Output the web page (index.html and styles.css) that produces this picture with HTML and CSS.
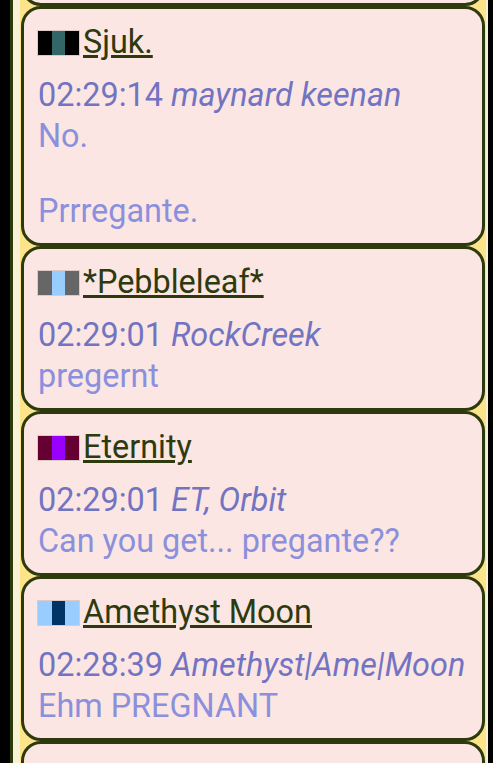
FILE: index.html
```html
<!DOCTYPE html>
<html lang="en">
<head>
    <meta charset="UTF-8">
    <meta name="viewport" content="width=device-width, initial-scale=1.0">
    <title>Chat</title>
    <link rel="stylesheet" href="styles.css">
</head>
<body>
    <div class="page">
        <div class="feed">
            <div class="post post-cut"></div>

            <div class="post">
                <div class="author">
                    <span class="swatch"><i style="background:#000"></i><i style="background:#336666"></i><i style="background:#000"></i></span><a href="#">Sjuk.</a>
                </div>
                <div class="meta">02:29:14 <em>maynard keenan</em></div>
                <div class="text">No.<br><br>Prrregante.</div>
            </div>

            <div class="post">
                <div class="author">
                    <span class="swatch"><i style="background:#666666"></i><i style="background:#99ccff"></i><i style="background:#666666"></i></span><a href="#">*Pebbleleaf*</a>
                </div>
                <div class="meta">02:29:01 <em>RockCreek</em></div>
                <div class="text">pregernt</div>
            </div>

            <div class="post">
                <div class="author">
                    <span class="swatch"><i style="background:#660033"></i><i style="background:#9900ff"></i><i style="background:#660033"></i></span><a href="#">Eternity</a>
                </div>
                <div class="meta">02:29:01 <em>ET, Orbit</em></div>
                <div class="text">Can you get... pregante??</div>
            </div>

            <div class="post">
                <div class="author">
                    <span class="swatch"><i style="background:#99ccff"></i><i style="background:#003366"></i><i style="background:#99ccff"></i></span><a href="#">Amethyst Moon</a>
                </div>
                <div class="meta">02:28:39 <em>Amethyst|Ame|Moon</em></div>
                <div class="text">Ehm PREGNANT</div>
            </div>

            <div class="post post-cut"></div>
        </div>
    </div>
</body>
</html>
```

FILE: styles.css
```css
html, body {
    margin: 0;
    padding: 0;
    height: 100%;
    overflow: hidden;
}

body {
    background-color: #000;
    font-family: Roboto, 'Noto Sans', sans-serif;
}

.page {
    box-sizing: border-box;
    width: 478px;
    height: 100%;
    margin-left: 10px;
    padding: 0 2px 0 7px;
    border-left: 3px solid #2d3a0e;
    background-color: #f7f2d6;
    overflow: hidden;
}

.feed {
    margin-top: -100px;
    padding: 0 1px;
    background-color: #fde48a;
}

.post {
    padding: 15px 14px 13px;
    border: 3px solid #2d3a0e;
    border-radius: 20px;
    background-color: #fce6e3;
    font-size: 32.4px;
    line-height: 37.5px;
}

.post-cut {
    height: 100px;
    padding: 0;
}

.author {
    display: flex;
    align-items: center;
    margin-bottom: 15px;
}

.swatch {
    display: flex;
    width: 41px;
    height: 24px;
    margin-right: 4px;
    outline: 1px solid rgba(0, 0, 0, 0.12);
}

.swatch i {
    flex: 1;
}

.author a {
    color: #2d3a0e;
}

.meta {
    margin-bottom: 3.5px;
    color: #7274c2;
}

.text {
    color: #8b90dc;
}
```
